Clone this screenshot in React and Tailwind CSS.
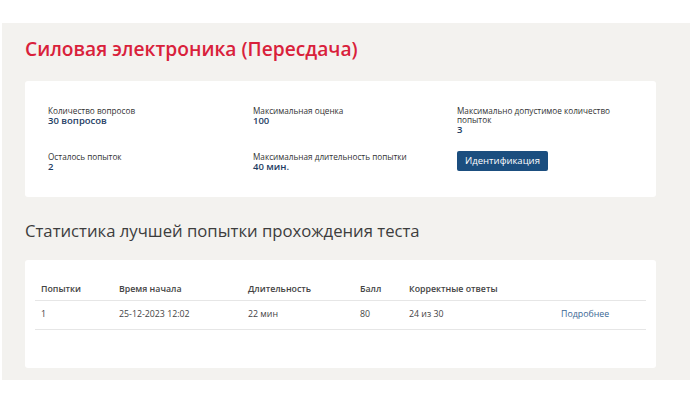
/**
 * Test info page — summary card and best attempt stats
 */
import React from 'react';

const info = [
  { label: 'Количество вопросов', value: '30 вопросов' },
  { label: 'Максимальная оценка', value: '100' },
  { label: 'Максимально допустимое количество попыток', value: '3' },
  { label: 'Осталось попыток', value: '2' },
  { label: 'Максимальная длительность попытки', value: '40 мин.' },
];

const InfoItem = ({ label, value }) => (
  <div>
    <p className="text-[8.2px] leading-[9px] text-[#333]">{label}</p>
    <p className="text-[9.5px] font-semibold leading-[11px] text-[#1e3d63]">{value}</p>
  </div>
);

export default function App() {
  return (
    <div className="w-[695px] h-[412px] bg-white pt-[23px] pl-[2px]" style={{ fontFamily: '"Open Sans", "Noto Sans", sans-serif' }}>
      <div className="w-[688px] h-[357px] bg-[#f3f2ef] pl-[23px] pt-[13px]">
        <h1 className="text-[19.2px] font-semibold text-[#d9213b] leading-[26px]">Силовая электроника (Пересдача)</h1>

        {/* Summary card */}
        <div className="mt-[19px] w-[631px] h-[116px] bg-white rounded-[3px] pl-[23px] pt-[25px]">
          <div className="grid grid-cols-[205px_204px_170px] gap-y-[16px]">
            <InfoItem {...info[0]} />
            <InfoItem {...info[1]} />
            <div className="w-[160px]"><InfoItem {...info[2]} /></div>
            <div className="pt-[1px]"><InfoItem {...info[3]} /></div>
            <div className="pt-[1px]"><InfoItem {...info[4]} /></div>
            <div className="-mt-[5px]">
              <button className="w-[91px] h-[20px] rounded-[2px] bg-[#1b4e7f] text-white text-[9.5px] font-medium">Идентификация</button>
            </div>
          </div>
        </div>

        <h2 className="mt-[22px] text-[16.7px] text-[#3d3d3d] leading-[24px]">Статистика лучшей попытки прохождения теста</h2>

        {/* Best attempt */}
        <div className="mt-[17px] w-[631px] h-[108px] bg-white rounded-[3px] pl-[10px] pr-[10px] pt-[20px]">
          <table className="w-[611px] text-[8.8px] text-[#444]">
            <thead>
              <tr className="border-b border-[#e6e6e6] h-[20px] text-left">
                <th className="font-semibold pl-[6px] w-[84px]">Попытки</th>
                <th className="font-semibold w-[129px]">Время начала</th>
                <th className="font-semibold w-[112px]">Длительность</th>
                <th className="font-semibold w-[49px]">Балл</th>
                <th className="font-semibold w-[152px]">Корректные ответы</th>
                <th />
              </tr>
            </thead>
            <tbody>
              <tr className="border-b border-[#e6e6e6] h-[29px]">
                <td className="pl-[6px]">1</td>
                <td>25-12-2023 12:02</td>
                <td>22 мин</td>
                <td>80</td>
                <td>24 из 30</td>
                <td className="text-[#3a6794]">Подробнее</td>
              </tr>
            </tbody>
          </table>
        </div>
      </div>
    </div>
  );
}
